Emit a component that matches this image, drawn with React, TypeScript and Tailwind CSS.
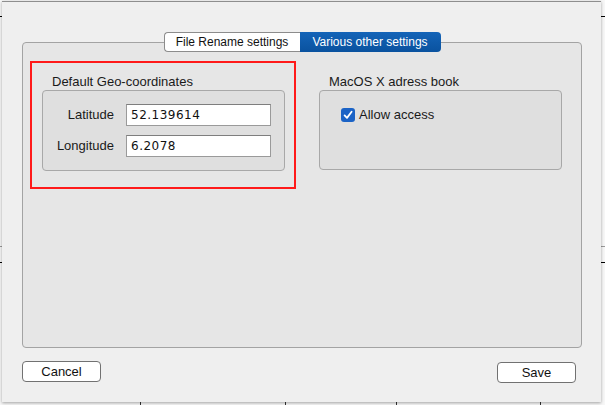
import React from "react";

const sans = { fontFamily: '"Liberation Sans", Arial, sans-serif' };

function GroupLabel({ children }: { children: React.ReactNode }) {
  return <div className="h-[16px] pl-[10px] text-[13px] leading-[16px] text-[#1a1a1a]">{children}</div>;
}

function Field({ label, value }: { label: string; value: string }) {
  return (
    <div className="flex items-center">
      <div className="w-[60px] text-right text-[13px] leading-[16px] text-[#1a1a1a]">{label}</div>
      <div
        className="ml-[12px] flex h-[22px] w-[145px] items-center border border-[#9a9a9a] border-t-[#7e7e7e] bg-white pl-[4px] text-[12px] tracking-[0.5px] text-[#111]"
        style={{ fontFamily: '"DejaVu Sans", sans-serif' }}
      >
        {value}
      </div>
    </div>
  );
}

export default function App() {
  return (
    <div className="relative h-[405px] w-[605px] overflow-hidden bg-[#f7f7f7] pl-[2px] pt-[1px]" style={sans}>
      {/* background window lines peeking out */}
      <div className="absolute left-0 top-[16px] h-[1px] w-[2px] bg-black" />
      <div className="absolute right-0 top-[16px] h-[1px] w-[4px] bg-black" />
      <div className="absolute left-0 top-[246px] h-[1px] w-[2px] bg-[#9a9a9a]" />
      <div className="absolute left-0 top-[262px] h-[1px] w-[2px] bg-black" />
      <div className="absolute right-0 top-[246px] h-[1px] w-[4px] bg-[#9a9a9a]" />
      <div className="absolute right-0 top-[262px] h-[1px] w-[4px] bg-black" />
      <div className="absolute bottom-0 left-[140px] h-[3px] w-[1px] bg-[#333]" />
      <div className="absolute bottom-0 left-[285px] h-[3px] w-[1px] bg-[#333]" />
      <div className="absolute bottom-0 left-[396px] h-[3px] w-[1px] bg-[#333]" />
      <div className="absolute bottom-0 left-[540px] h-[3px] w-[1px] bg-[#333]" />

      {/* sheet */}
      <div className="relative flex h-[401px] w-[599px] flex-col border-t border-[#8e8e8e] bg-[#efefef] pl-[20px] pt-[30px] shadow-[0_1px_3px_rgba(0,0,0,0.35)]">
        {/* tabs */}
        <div className="relative z-10 flex h-[20px] w-[560px] justify-center">
          <div className="flex h-[20px] w-[136px] items-center justify-center rounded-l-[4px] border border-r-0 border-[#8c8c8c] bg-white text-[12px] text-[#111]">
            File Rename settings
          </div>
          <div className="flex h-[20px] w-[141px] items-center justify-center rounded-r-[4px] bg-gradient-to-b from-[#1464b8] to-[#0a529f] text-[12px] text-white">
            Various other settings
          </div>
        </div>

        {/* tab box */}
        <div className="-mt-[10px] h-[306px] w-[560px] rounded-[4px] border border-[#a3a3a3] bg-[#e6e6e6] pl-[7px] pt-[18px]">
          <div className="flex items-start">
            {/* red highlighted group */}
            <div className="h-[128px] w-[266px] border-2 border-[#ff1a1a] pl-[10px] pr-[9px] pt-[11px]">
              <GroupLabel>Default Geo-coordinates</GroupLabel>
              <div className="flex h-[81px] w-[243px] flex-col gap-[9px] rounded-[4px] border border-[#a8a8a8] bg-[#dfdfdf] pl-[11px] pt-[13px]">
                <Field label="Latitude" value="52.139614" />
                <Field label="Longitude" value="6.2078" />
              </div>
            </div>

            {/* address book group */}
            <div className="ml-[23px] mt-[13px]">
              <GroupLabel>MacOS X adress book</GroupLabel>
              <div className="h-[80px] w-[243px] rounded-[4px] border border-[#a8a8a8] bg-[#dfdfdf] pl-[21px] pt-[16px]">
                <div className="flex items-center">
                  <div className="flex h-[14px] w-[14px] items-center justify-center rounded-[3px] bg-[#1b63c6]">
                    <svg width="12" height="12" viewBox="0 0 12 12">
                      <path d="M2.6 6.4 L5 8.9 L9.6 2.8" fill="none" stroke="white" strokeWidth="1.8" strokeLinecap="round" strokeLinejoin="round" />
                    </svg>
                  </div>
                  <span className="ml-[4px] text-[13px] leading-[16px] text-[#1a1a1a]">Allow access</span>
                </div>
              </div>
            </div>
          </div>
        </div>

        {/* buttons */}
        <div className="mt-[13px] flex w-[554px] items-start justify-between">
          <button className="flex h-[21px] w-[79px] items-center justify-center rounded-[4px] border border-[#717171] bg-white text-[13px] text-[#111]">
            Cancel
          </button>
          <button className="mt-[1px] flex h-[21px] w-[79px] items-center justify-center rounded-[4px] border border-[#717171] bg-white text-[13px] text-[#111]">
            Save
          </button>
        </div>
      </div>
    </div>
  );
}
